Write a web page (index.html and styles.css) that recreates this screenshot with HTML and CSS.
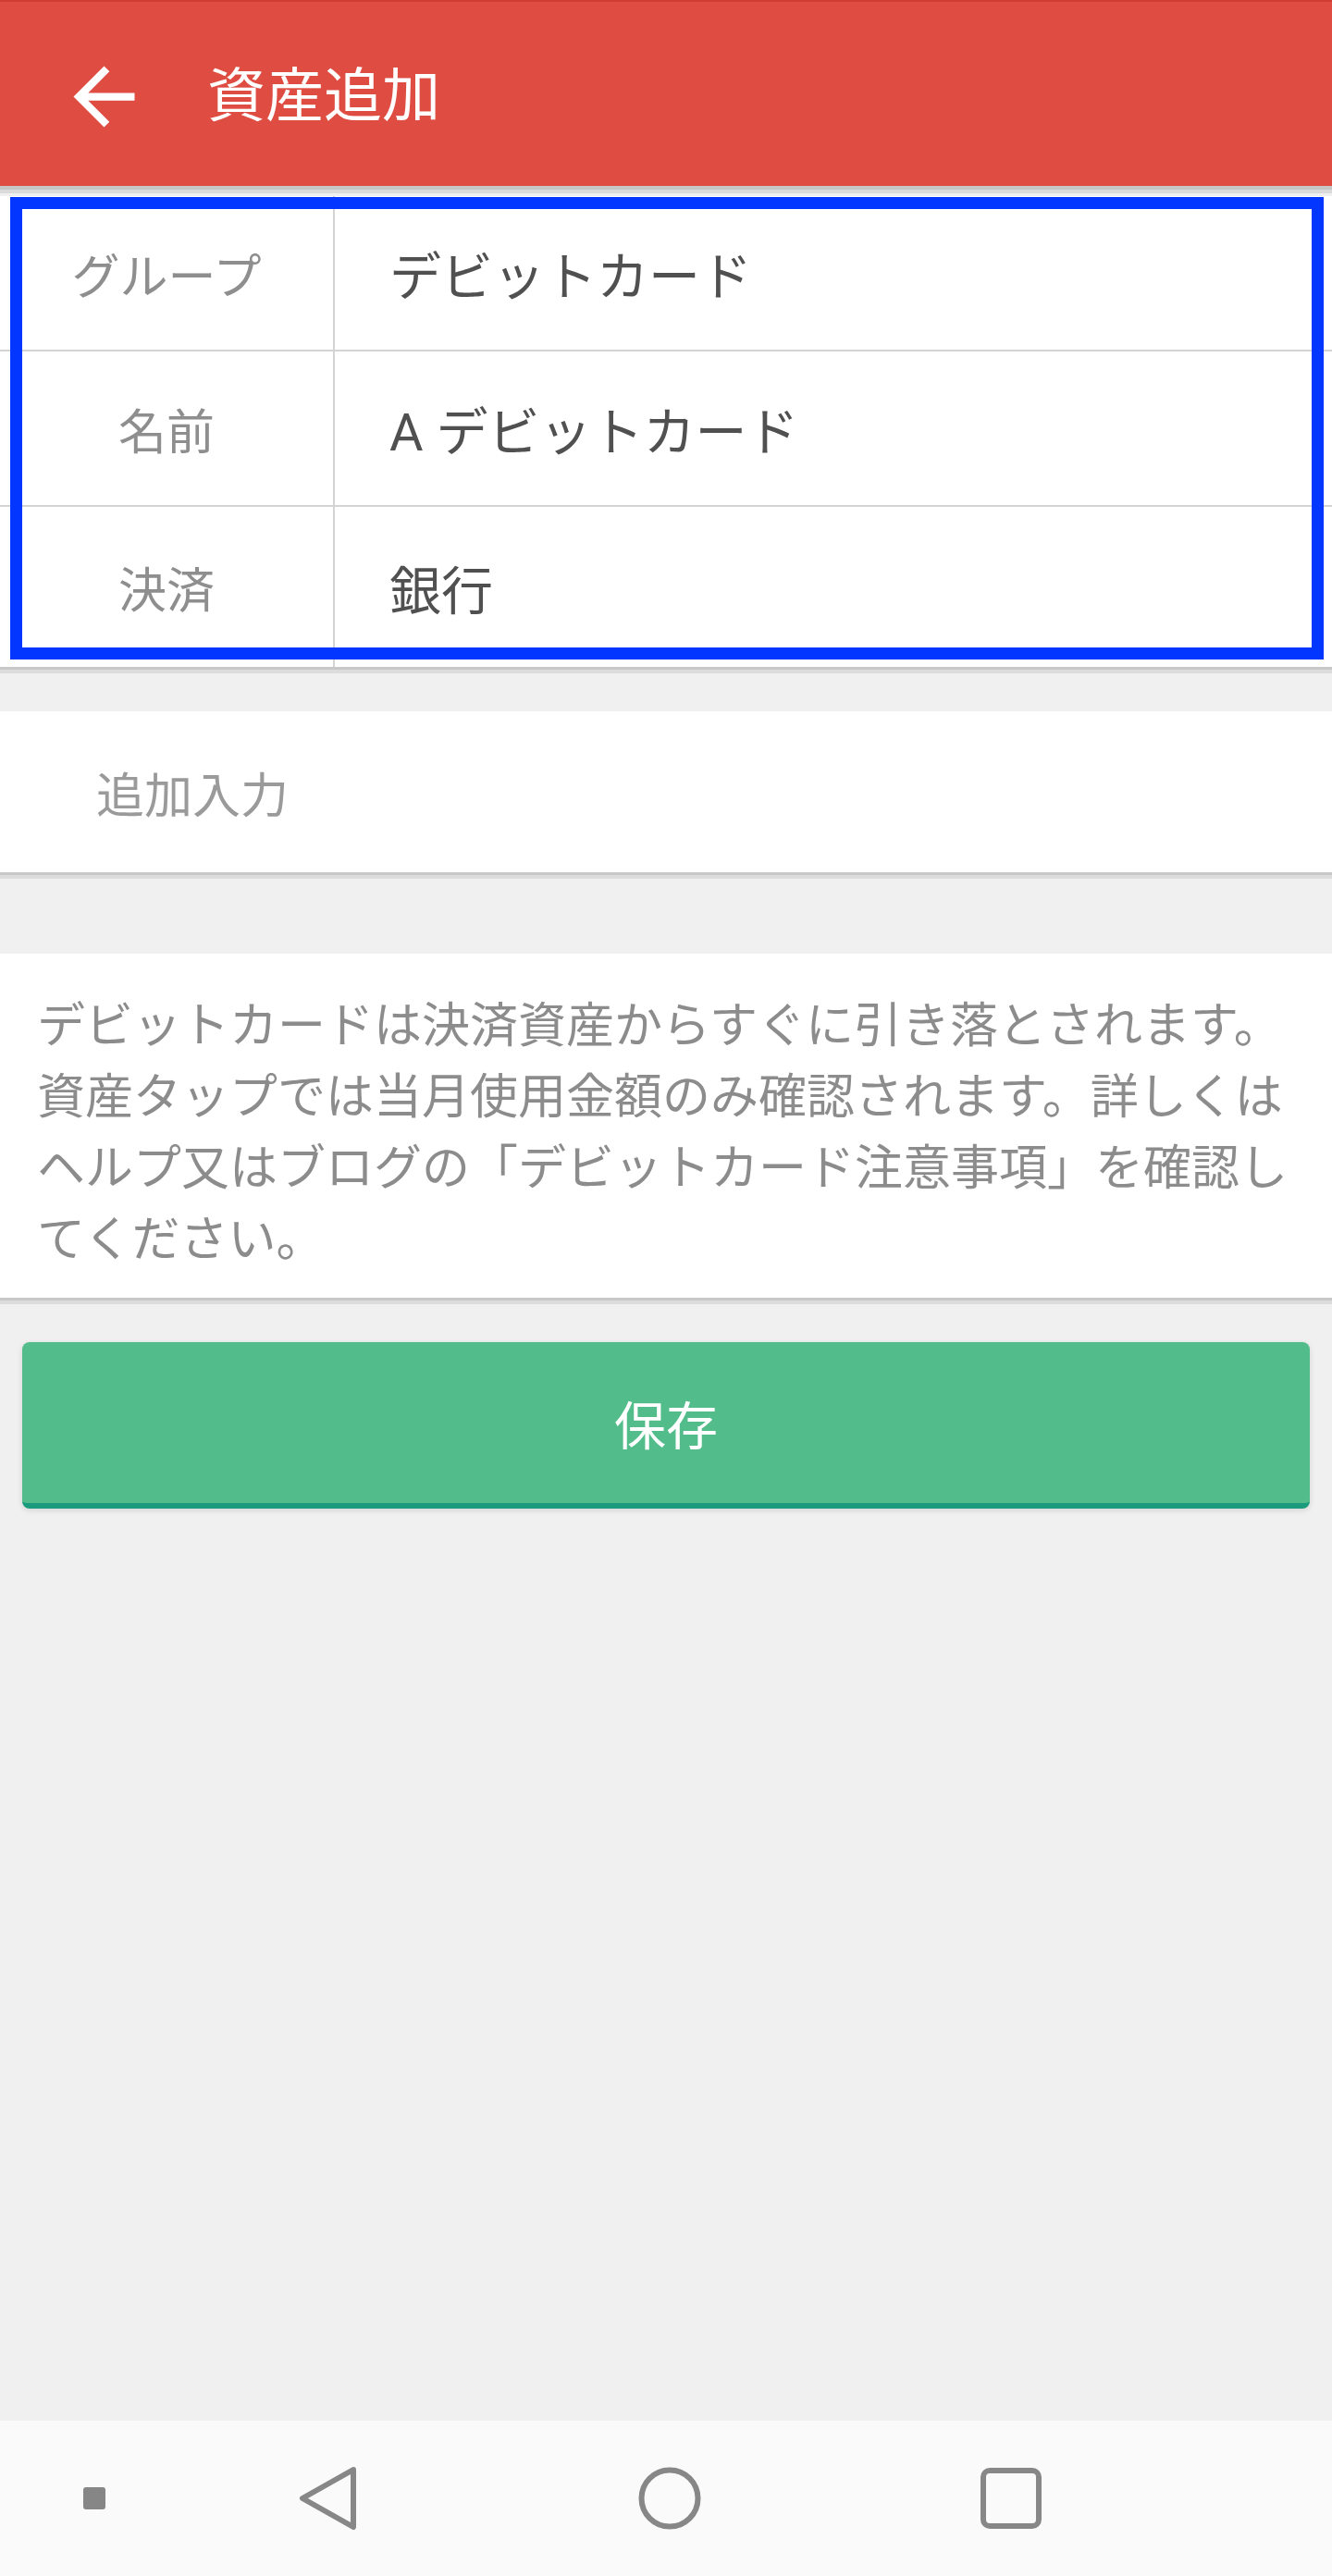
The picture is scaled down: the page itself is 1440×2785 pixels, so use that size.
FILE: index.html
```html
<!DOCTYPE html>
<html lang="ja">
<head>
<meta charset="utf-8">
<title>資産追加</title>
<link rel="stylesheet" href="styles.css">
</head>
<body>
<div class="screen">
  <header class="appbar">
    <svg class="back" viewBox="0 0 24 24" aria-hidden="true"><path d="M20 11H7.83l5.59-5.59L12 4l-8 8 8 8 1.41-1.41L7.83 13H20v-2z" fill="#fff"/></svg>
    <h1 class="title">資産追加</h1>
  </header>

  <section class="table card">
    <div class="row">
      <div class="label">グループ</div>
      <div class="value">デビットカード</div>
    </div>
    <div class="row">
      <div class="label">名前</div>
      <div class="value">A デビットカード</div>
    </div>
    <div class="row last">
      <div class="label">決済</div>
      <div class="value">銀行</div>
    </div>
    <div class="highlight"></div>
  </section>

  <section class="extra card">追加入力</section>

  <section class="info card">デビットカードは決済資産からすぐに引き落とされます。資産タップでは当月使用金額のみ確認されます。詳しくはヘルプ又はブログの「デビットカード注意事項」を確認してください。</section>

  <button class="save" type="button">保存</button>

  <nav class="navbar">
    <span class="dot"></span>
    <svg class="nav-icon nav-back" viewBox="0 0 72 72" aria-hidden="true"><path d="M63 5 L8 36 L63 67 Z" fill="none" stroke="#878787" stroke-width="6" stroke-linejoin="round"/></svg>
    <svg class="nav-icon nav-home" viewBox="0 0 72 72" aria-hidden="true"><circle cx="36" cy="36" r="30.5" fill="none" stroke="#878787" stroke-width="6"/></svg>
    <svg class="nav-icon nav-recent" viewBox="0 0 72 72" aria-hidden="true"><rect x="6" y="6" width="60" height="60" rx="7" fill="none" stroke="#878787" stroke-width="6"/></svg>
  </nav>
</div>
</body>
</html>
```

FILE: styles.css
```css
* { box-sizing: border-box; }

html, body {
  margin: 0;
  padding: 0;
}

body {
  background: #f0f0f0;
  font-family: Roboto, "Noto Sans CJK JP", sans-serif;
}

.screen {
  width: 1440px;
  min-height: 2785px;
  display: flex;
  flex-direction: column;
  background: #f0f0f0;
}

.appbar {
  height: 201px;
  background: #de4c42;
  border-top: 2px solid #cf3d35;
  display: flex;
  align-items: center;
  padding-left: 63px;
  box-shadow: 0 4px 0 #c6c6c6, 0 8px 0 #dadada;
  position: relative;
  z-index: 1;
}

.back {
  width: 99px;
  height: 99px;
  flex: none;
  margin-top: 6px;
}

.title {
  margin: 4px 0 0 62px;
  font-weight: 400;
  font-size: 63px;
  line-height: 1.2;
  color: #ffffff;
}

.card {
  background: #ffffff;
  box-shadow: 0 3px 0 #c8c8c8, 0 7px 0 #dcdcdc;
}

.table {
  margin-top: 11px;
  position: relative;
}

.row {
  display: flex;
  height: 168px;
  border-bottom: 2px solid #d4d4d4;
}

.row.last {
  height: 173px;
  border-bottom: none;
}

.label {
  width: 362px;
  flex: none;
  border-right: 2px solid #d4d4d4;
  display: flex;
  align-items: center;
  justify-content: center;
  padding-top: 12px;
  font-size: 52px;
  line-height: 1.2;
  color: #8e8e8e;
}

.value {
  flex: 1;
  display: flex;
  align-items: center;
  padding-left: 59px;
  padding-top: 12px;
  font-size: 56px;
  line-height: 1.2;
  color: #505050;
}

.highlight {
  position: absolute;
  left: 11px;
  top: 1px;
  width: 1420px;
  height: 500px;
  border: 13px solid #0336ff;
  pointer-events: none;
}

.extra {
  margin-top: 48px;
  height: 174px;
  display: flex;
  align-items: center;
  padding-left: 104px;
  padding-top: 12px;
  font-size: 52px;
  line-height: 1.2;
  color: #9a9a9a;
}

.info {
  margin-top: 88px;
  padding: 40px 30px 24px 40px;
  font-size: 52px;
  line-height: 77px;
  color: #8c8c8c;
}

.save {
  margin: 48px 24px 0;
  height: 180px;
  border: none;
  border-bottom: 6px solid #1a9b7d;
  border-radius: 8px;
  background: #52bd8a;
  color: #ffffff;
  font-family: Roboto, "Noto Sans CJK JP", sans-serif;
  font-size: 56px;
  line-height: 1.2;
  padding: 12px 0 0;
  box-shadow: 0 2px 6px rgba(0, 0, 0, 0.12);
}

.navbar {
  margin-top: auto;
  height: 168px;
  background: #fafafa;
  display: flex;
  align-items: center;
  padding-left: 90px;
}

.dot {
  width: 24px;
  height: 24px;
  border-radius: 3px;
  background: #868686;
  flex: none;
}

.nav-icon {
  width: 72px;
  height: 72px;
  flex: none;
}

.nav-back { margin-left: 205px; }
.nav-home { margin-left: 297px; }
.nav-recent { margin-left: 297px; }
```
